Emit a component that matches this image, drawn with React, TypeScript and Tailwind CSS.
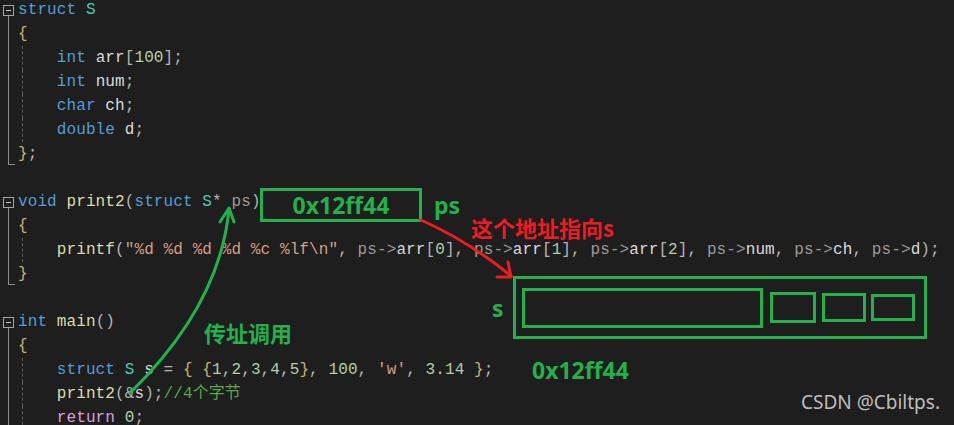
import React from 'react';

type Tok = [string, string];

const C: Record<string, string> = {
  k: 'text-[#569cd6]',
  t: 'text-[#4ec9b0]',
  f: 'text-[#dcdcaa]',
  p: 'text-[#b4b4b4]',
  i: 'text-[#dadada]',
  n: 'text-[#b5cea8]',
  s: 'text-[#d69d85]',
  c: 'text-[#57a64a]',
  r: 'text-[#d8a0df]',
  g: 'text-[#9a9a9a]',
  b: 'text-[#c8b26e]',
  w: 'text-[#dadada]',
};

type Line = { toks: Tok[]; gutter?: 'head' | 'mid' | 'end'; guide?: boolean };

const lines: Line[] = [
  { gutter: 'head', toks: [['struct', 'k'], [' ', 'w'], ['S', 't']] },
  { gutter: 'mid', toks: [['{', 'b']] },
  { gutter: 'mid', guide: true, toks: [['    ', 'w'], ['int', 'k'], [' ', 'w'], ['arr', 'i'], ['[', 'p'], ['100', 'n'], ['];', 'p']] },
  { gutter: 'mid', guide: true, toks: [['    ', 'w'], ['int', 'k'], [' ', 'w'], ['num', 'i'], [';', 'p']] },
  { gutter: 'mid', guide: true, toks: [['    ', 'w'], ['char', 'k'], [' ', 'w'], ['ch', 'i'], [';', 'p']] },
  { gutter: 'mid', guide: true, toks: [['    ', 'w'], ['double', 'k'], [' ', 'w'], ['d', 'i'], [';', 'p']] },
  { gutter: 'end', toks: [['}', 'b'], [';', 'p']] },
  { toks: [] },
  {
    gutter: 'head',
    toks: [['void', 'k'], [' ', 'w'], ['print2', 'f'], ['(', 'p'], ['struct', 'k'], [' ', 'w'], ['S', 't'], ['*', 'p'], [' ', 'w'], ['ps', 'g'], [')', 'p']],
  },
  { gutter: 'mid', toks: [['{', 'b']] },
  {
    gutter: 'mid',
    guide: true,
    toks: [
      ['    ', 'w'], ['printf', 'f'], ['(', 'p'], ['"%d %d %d %d %c %lf\\n"', 's'], [', ', 'p'],
      ['ps', 'g'], ['->', 'g'], ['arr', 'i'], ['[', 'p'], ['0', 'n'], ['], ', 'p'],
      ['ps', 'g'], ['->', 'g'], ['arr', 'i'], ['[', 'p'], ['1', 'n'], ['], ', 'p'],
      ['ps', 'g'], ['->', 'g'], ['arr', 'i'], ['[', 'p'], ['2', 'n'], ['], ', 'p'],
      ['ps', 'g'], ['->', 'g'], ['num', 'i'], [', ', 'p'],
      ['ps', 'g'], ['->', 'g'], ['ch', 'i'], [', ', 'p'],
      ['ps', 'g'], ['->', 'g'], ['d', 'i'], [');', 'p'],
    ],
  },
  { gutter: 'end', toks: [['}', 'b']] },
  { toks: [] },
  { gutter: 'head', toks: [['int', 'k'], [' ', 'w'], ['main', 'f'], ['()', 'p']] },
  { gutter: 'mid', toks: [['{', 'b']] },
  {
    gutter: 'mid',
    guide: true,
    toks: [
      ['    ', 'w'], ['struct', 'k'], [' ', 'w'], ['S', 't'], [' ', 'w'], ['s', 'i'], [' = ', 'p'], ['{', 'b'], [' ', 'w'], ['{', 'b'],
      ['1', 'n'], [',', 'p'], ['2', 'n'], [',', 'p'], ['3', 'n'], [',', 'p'], ['4', 'n'], [',', 'p'], ['5', 'n'], ['}', 'b'], [', ', 'p'],
      ['100', 'n'], [', ', 'p'], ["'w'", 's'], [', ', 'p'], ['3.14', 'n'], [' ', 'w'], ['}', 'b'], [';', 'p'],
    ],
  },
  { gutter: 'mid', guide: true, toks: [['    ', 'w'], ['print2', 'f'], ['(&', 'p'], ['s', 'i'], [');', 'p'], ['//4个字节', 'c']] },
  { gutter: 'mid', guide: true, toks: [['    ', 'w'], ['return', 'r'], [' ', 'w'], ['0', 'n'], [';', 'p']] },
];

const Gutter: React.FC<{ kind?: Line['gutter'] }> = ({ kind }) => (
  <div className="relative w-[18px] h-6 shrink-0">
    {kind === 'head' && (
      <>
        <div className="absolute left-[3px] top-[7px] w-[11px] h-[11px] border border-[#a5a5a5] flex items-center justify-center">
          <div className="w-[5px] h-px bg-[#c8c8c8]" />
        </div>
        <div className="absolute left-[8px] top-[18px] bottom-0 w-px bg-[#8c8c8c]" />
      </>
    )}
    {kind === 'mid' && <div className="absolute left-[8px] top-0 bottom-0 w-px bg-[#8c8c8c]" />}
    {kind === 'end' && <div className="absolute left-[8px] top-0 h-[23px] w-[7px] border-l border-b border-[#8c8c8c]" />}
  </div>
);

const CodeLine: React.FC<{ line: Line }> = ({ line }) => (
  <div className="relative flex h-6 items-center">
    <Gutter kind={line.gutter} />
    {line.guide && <div className="absolute left-[22px] top-0 bottom-0 border-l border-dashed border-[#5c5c5c]" />}
    <div className="whitespace-pre">
      {line.toks.map(([text, c], i) => (
        <span key={i} className={C[c]}>
          {text}
        </span>
      ))}
    </div>
  </div>
);

const note = "font-['Noto_Sans','Noto_Sans_CJK_SC',sans-serif] font-bold text-[23px] leading-[28px] text-[#22b14c]";
const cjk = "font-['Noto_Sans_CJK_SC','Noto_Sans',sans-serif] font-bold text-[22px] leading-[28px]";

const App: React.FC = () => {
  return (
    <div className="relative w-[954px] h-[425px] overflow-hidden bg-[#1e1e1e]">
      <div className="mt-[-2px] font-['Liberation_Mono','Noto_Sans_CJK_SC',monospace] text-[16px] tracking-[0.1px] leading-6">
        {lines.map((l, i) => (
          <CodeLine key={i} line={l} />
        ))}
      </div>

      {/* annotations drawn over the code */}
      <div className="absolute left-[260px] top-[188px] flex items-center">
        <div className="w-[162px] h-[34px] border-[3px] border-[#22b14c] flex items-center justify-center">
          <span className={note}>0x12ff44</span>
        </div>
        <span className={`${note} ml-[12px]`}>ps</span>
      </div>

      <span className={`absolute left-[471px] top-[213px] ${cjk} text-[#ed1c24]`}>这个地址指向s</span>
      <span className={`absolute left-[204px] top-[318px] ${cjk} text-[#22b14c]`}>传址调用</span>

      <div className="absolute left-[492px] top-[276px] flex flex-col">
        <div className="flex items-center">
          <span className={`${note} w-[21px]`}>s</span>
          <div className="w-[414px] h-[63px] border-[3px] border-[#22b14c] flex items-center pl-[6px]">
            <div className="w-[241px] h-[40px] border-[3px] border-[#22b14c]" />
            <div className="ml-[7px] w-[46px] h-[31px] border-[3px] border-[#22b14c]" />
            <div className="ml-[6px] w-[44px] h-[29px] border-[3px] border-[#22b14c]" />
            <div className="ml-[5px] w-[44px] h-[27px] border-[3px] border-[#22b14c]" />
          </div>
        </div>
        <span className={`${note} ml-[40px] mt-[17px]`}>0x12ff44</span>
      </div>

      <span className="absolute right-[14px] bottom-[10px] font-['Noto_Sans',sans-serif] text-[19px] leading-[26px] text-[#bdbdbd]">
        CSDN @Cbiltps.
      </span>

      <svg className="absolute left-0 top-0" width="954" height="425" viewBox="0 0 954 425" fill="none">
        <path d="M130 393 Q220 305 229 209" stroke="#22b14c" strokeWidth="3" strokeLinecap="round" />
        <path d="M220 222 L229 208 L234 222" stroke="#22b14c" strokeWidth="3" strokeLinecap="round" strokeLinejoin="round" />
        <path d="M421 220 Q470 242 511 276" stroke="#ed1c24" strokeWidth="3" strokeLinecap="round" />
        <path d="M508 262 L511 277 L497 277" stroke="#ed1c24" strokeWidth="3" strokeLinecap="round" strokeLinejoin="round" />
      </svg>
    </div>
  );
};

export default App;
